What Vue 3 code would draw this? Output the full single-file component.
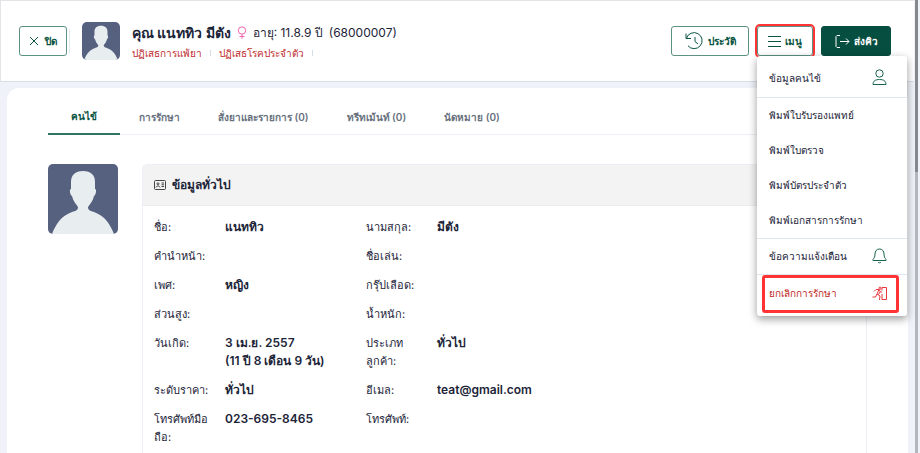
<script setup>
import { ref } from "vue"

const activeTab = ref(0)
const menuOpen = ref(true)

const tabs = ["คนไข้", "การรักษา", "สั่งยาและรายการ (0)", "ทรีทเม้นท์ (0)", "นัดหมาย (0)"]

const printItems = ["พิมพ์ใบรับรองแพทย์", "พิมพ์ใบตรวจ", "พิมพ์บัตรประจำตัว", "พิมพ์เอกสารการรักษา"]

const rows = [
  ["ชื่อ:", ["แนททิว"], "นามสกุล:", ["มีตัง"]],
  ["คำนำหน้า:", [], "ชื่อเล่น:", []],
  ["เพศ:", ["หญิง"], "กรุ๊ปเลือด:", []],
  ["ส่วนสูง:", [], "น้ำหนัก:", []],
  ["วันเกิด:", ["3 เม.ย. 2557", "(11 ปี 8 เดือน 9 วัน)"], "ประเภทลูกค้า:", ["ทั่วไป"]],
  ["ระดับราคา:", ["ทั่วไป"], "อีเมล:", ["teat@gmail.com"]],
  ["โทรศัพท์มือถือ:", ["023-695-8465"], "โทรศัพท์:", []]
]
</script>

<template>
  <div class="page">
    <div class="content">
      <header class="topbar">
        <button class="btn close-btn">
          <svg width="10" height="10" viewBox="0 0 10 10"><path d="M1 1l8 8M9 1l-8 8" /></svg>
          ปิด
        </button>
        <span class="line"></span>
        <svg class="avatar small" viewBox="0 0 70 70">
          <rect width="70" height="70" fill="#56607f" />
          <path fill="#e8edef" d="M35 7c-8 0-12 4-12 11v7c-2 0-1 6 1 7 1 5 4 8 6 11 0 3-2 4-6 5C13 52 8 60 4 70h62c-4-10-9-18-20-22-4-1-6-2-6-5 2-3 5-6 6-11 2-1 3-7 1-7v-7c0-7-4-11-12-11z" />
        </svg>
        <div class="patient">
          <div class="patient-name">
            <h1>คุณ แนททิว มีตัง</h1>
            <svg class="female" width="10" height="13" viewBox="0 0 10 13"><circle cx="5" cy="4.5" r="3.7" /><path d="M5 8.2v4.5M2.5 10.5h5" /></svg>
            <span>อายุ: 11.8.9 ปี</span>
            <span>(68000007)</span>
          </div>
          <div class="alerts">
            <span>ปฏิเสธการแพ้ยา</span>
            <span>ปฏิเสธโรคประจำตัว</span>
          </div>
        </div>
        <div class="actions">
          <button class="btn history-btn">
            <svg width="19" height="18" viewBox="0 0 19 18"><path d="M1 1.5v5h5M1.500 6.200A8 8 0 1 1 3 13.800M10 5v4.500l3 2.500" /></svg>
            ประวัติ
          </button>
          <div class="menu-wrap">
            <button class="btn menu-btn" @click="menuOpen = !menuOpen">
              <svg width="13" height="11" viewBox="0 0 13 11"><path d="M0 .5h13M0 5.500h13M0 10.500h13" /></svg>
              เมนู
            </button>
            <div class="menu" v-if="menuOpen">
              <button class="menu-item">
                ข้อมูลคนไข้
                <svg width="15" height="17" viewBox="0 0 15 17"><circle cx="7.500" cy="4.500" r="3.700" /><path d="M1 15.500c0-3.600 2.500-5 6.500-5s6.500 1.400 6.500 5z" /></svg>
              </button>
              <div class="group">
                <button class="menu-item" v-for="item in printItems" :key="item">{{ item }}</button>
              </div>
              <button class="menu-item">
                ข้อความแจ้งเตือน
                <svg width="15" height="16" viewBox="0 0 15 16"><path d="M7.500 1C4.500 1 3 3.200 3 6c0 3-1 4-2 5.500v1h13v-1C13 10 12 9 12 6c0-2.800-1.500-5-4.500-5zM6 14.200c.8.800 2.200.8 3 0" /></svg>
              </button>
              <div class="group last">
                <button class="menu-item cancel">
                  ยกเลิกการรักษา
                  <svg width="15" height="15" viewBox="0 0 15 15"><circle cx="8" cy="2.200" r="1.100" /><path d="M10 1.500h4.500v12H10M10 1.500v3M10 8v5.500M2 5.500l2-2h3L5 8l3 2-.5 4M7 3.500l1.500 2.500H10M5 8l-1.500 3H.5M8 6L6.500 8.500" /></svg>
                </button>
              </div>
            </div>
          </div>
          <button class="btn send-btn">
            <svg width="15" height="13" viewBox="0 0 15 13"><path d="M5 .5H2l-1 1v10l1 1h3M5 6.500h9M11 3.500l3 3-3 3" /></svg>
            ส่งคิว
          </button>
        </div>
      </header>

      <main class="sheet">
        <nav class="tabs">
          <button v-for="(tab, i) in tabs" :key="tab" :class="{ active: activeTab === i }" @click="activeTab = i">{{ tab }}</button>
        </nav>
        <div class="profile">
          <svg class="avatar" viewBox="0 0 70 70">
            <rect width="70" height="70" fill="#56607f" />
            <path fill="#e8edef" d="M35 7c-8 0-12 4-12 11v7c-2 0-1 6 1 7 1 5 4 8 6 11 0 3-2 4-6 5C13 52 8 60 4 70h62c-4-10-9-18-20-22-4-1-6-2-6-5 2-3 5-6 6-11 2-1 3-7 1-7v-7c0-7-4-11-12-11z" />
          </svg>
          <section class="panel">
            <h2>
              <svg width="12" height="10" viewBox="0 0 12 10"><rect x=".5" y=".5" width="11" height="9" rx="1" /><circle cx="4" cy="3.800" r="1" /><path d="M2 7.500c0-2 4-2 4 0M7.500 3h2.500M7.500 4.800h2.500M7.500 6.500h2.500" /></svg>
              ข้อมูลทั่วไป
            </h2>
            <dl>
              <template v-for="row in rows" :key="row[0]">
                <dt>{{ row[0] }}</dt>
                <dd><div v-for="line in row[1]" :key="line">{{ line }}</div></dd>
                <dt>{{ row[2] }}</dt>
                <dd><div v-for="line in row[3]" :key="line">{{ line }}</div></dd>
              </template>
            </dl>
          </section>
        </div>
      </main>
    </div>
    <div class="scrollbar"><div class="thumb"></div></div>
  </div>
</template>

<style>
body {
  overflow: hidden;
}
</style>

<style scoped>
* {
  box-sizing: border-box;
}

.page {
  display: flex;
  height: 100vh;
  overflow: hidden;
  background-color: #eff2f8;
  color: #1c2438;
  font-family: Inter, "Noto Sans", sans-serif;
  font-size: 12px;
  line-height: 18px;
}

.content {
  flex: 1;
  min-width: 0;
}

svg {
  flex: none;
  fill: none;
  stroke: currentColor;
  stroke-width: 1;
}

button {
  font: inherit;
  color: inherit;
  background: none;
  border: none;
  padding: 0;
  cursor: pointer;
  white-space: nowrap;
}

.topbar {
  display: flex;
  align-items: center;
  height: 82px;
  padding: 0 23px 0 18px;
  border-top: 1px solid #e2e4e8;
  border-left: 1px solid #e2e4e8;
  border-bottom: 1px solid #d9dde6;
  background-color: #fff;
}

.btn {
  display: flex;
  align-items: center;
  justify-content: center;
  gap: 4px;
  height: 30px;
  border: 1px solid #5d9184;
  border-radius: 3px;
  background-color: #fff;
  color: #0a5443;
  font-size: 10px;
  font-weight: 600;
}

.close-btn {
  width: 48px;
  gap: 6px;
}

.line {
  width: 1px;
  height: 24px;
  margin: 0 12px 0 2px;
  background-color: #e2e8f0;
}

.avatar {
  width: 70px;
  height: 70px;
  border-radius: 5px;
  stroke: none;
}

.avatar.small {
  width: 38px;
  height: 38px;
}

.patient {
  margin-left: 12px;
  padding-top: 2px;
}

.patient-name {
  display: flex;
  align-items: center;
  gap: 6px;
  white-space: nowrap;
}

h1 {
  margin: 0;
  font-size: 14px;
  line-height: 20px;
}

.female {
  color: #f062ae;
}

.alerts {
  display: flex;
  margin-top: 1px;
  color: #c02b2f;
  font-size: 10px;
  font-weight: 500;
}

.alerts span {
  display: flex;
  align-items: center;
  margin-right: 8px;
}

.alerts span::after {
  content: "";
  width: 1px;
  height: 6px;
  margin-left: 8px;
  background-color: #d5dcea;
}

.actions {
  display: flex;
  gap: 8px;
  margin-left: auto;
}

.history-btn {
  width: 78px;
}

.menu-wrap {
  position: relative;
}

.menu-btn {
  width: 56px;
  outline: 2px solid #f33;
}

.send-btn {
  width: 70px;
  border-color: #064e3f;
  background-color: #064e3f;
  color: #fff;
}

.menu {
  position: absolute;
  top: 30px;
  left: 0;
  z-index: 1;
  width: 150px;
  border-radius: 3px;
  background-color: #fff;
  box-shadow: 0 3px 8px rgba(0, 0, 0, 0.4);
}

.menu-item {
  display: flex;
  align-items: center;
  justify-content: space-between;
  width: 100%;
  height: 35px;
  padding: 0 20px 2px 12px;
  font-size: 10px;
  font-weight: 500;
}

.menu > .menu-item:first-child {
  height: 41px;
  padding: 2px 20px 0 12px;
}

.menu-item svg {
  color: #17644f;
}

.group {
  border-top: 1px solid #dfe6ef;
  border-bottom: 1px solid #dfe6ef;
}

.group.last {
  padding: 0 8px 3px 5px;
  border-bottom: none;
}

.cancel {
  height: 38px;
  padding: 0 9px 2px 4px;
  border: 3px solid #f33;
  border-radius: 3px;
  color: #c01f25;
}

.cancel svg {
  color: #e8383d;
}

.sheet {
  min-height: 500px;
  margin: 6px 6px 0 7px;
  padding: 0 41px;
  border-radius: 12px;
  background-color: #fff;
}

.tabs {
  display: flex;
  height: 47px;
  padding-top: 11px;
  border-bottom: 1px solid #edf0f6;
}

.tabs button {
  height: 36px;
  padding: 0 19px;
  color: #68717e;
  font-size: 10px;
  font-weight: 600;
}

.tabs button.active {
  padding: 0 23px;
  border-bottom: 2px solid #2f7465;
  color: #0a5443;
}

.profile {
  display: flex;
  align-items: flex-start;
  gap: 24px;
  padding-top: 29px;
}

.panel {
  flex: 1;
  min-height: 400px;
  border: 1px solid #eceff6;
  border-radius: 5px;
}

h2 {
  display: flex;
  align-items: center;
  gap: 6px;
  height: 41px;
  margin: 0;
  padding: 0 11px;
  border-bottom: 1px solid #ececee;
  background-color: #f3f3f3;
  font-size: 12px;
}

h2 svg {
  color: #444;
}

dl {
  display: grid;
  grid-template-columns: 59px 129px 59px 1fr;
  gap: 11px 12px;
  margin: 0;
  padding: 12px 11px;
}

dt {
  min-height: 18px;
  font-size: 11px;
}

dd {
  margin: 0;
  font-weight: 600;
}

.scrollbar {
  width: 6px;
  padding: 0 2px 0 1px;
  background-color: #b4b7bb;
  background-clip: content-box;
}

.thumb {
  height: 172px;
  background-color: #85888c;
}
</style>
